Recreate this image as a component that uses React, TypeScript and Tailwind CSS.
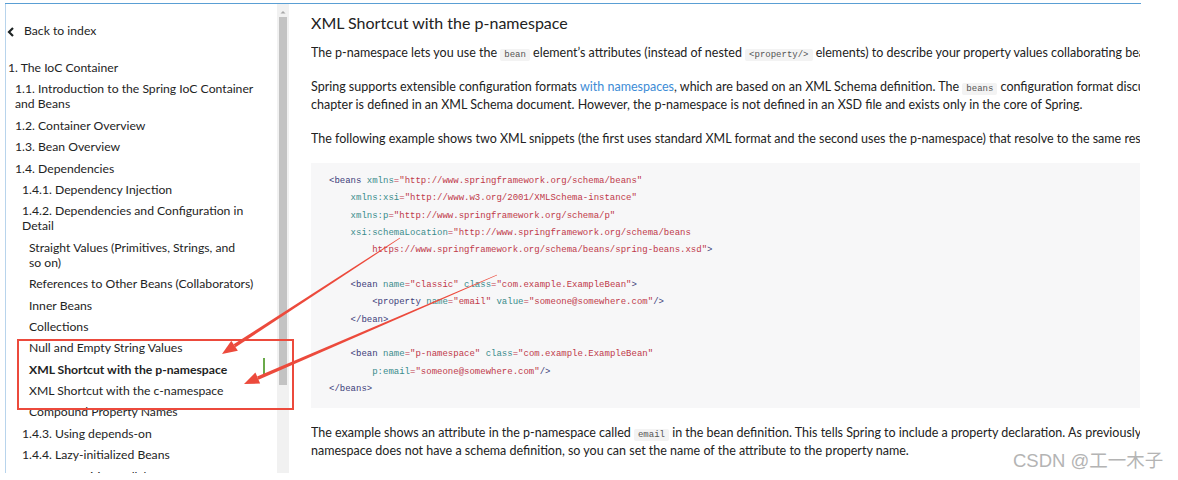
import React from "react";

type NavItem = { label: string; indent: number; bold?: boolean };

const navItems: NavItem[] = [
  { label: "1. The IoC Container", indent: 0 },
  { label: "1.1. Introduction to the Spring IoC Container and Beans", indent: 1 },
  { label: "1.2. Container Overview", indent: 1 },
  { label: "1.3. Bean Overview", indent: 1 },
  { label: "1.4. Dependencies", indent: 1 },
  { label: "1.4.1. Dependency Injection", indent: 2 },
  { label: "1.4.2. Dependencies and Configuration in Detail", indent: 2 },
  { label: "Straight Values (Primitives, Strings, and\nso on)", indent: 3 },
  { label: "References to Other Beans (Collaborators)", indent: 3 },
  { label: "Inner Beans", indent: 3 },
  { label: "Collections", indent: 3 },
  { label: "Null and Empty String Values", indent: 3 },
  { label: "XML Shortcut with the p-namespace", indent: 3, bold: true },
  { label: "XML Shortcut with the c-namespace", indent: 3 },
  { label: "Compound Property Names", indent: 3 },
  { label: "1.4.3. Using depends-on", indent: 2 },
  { label: "1.4.4. Lazy-initialized Beans", indent: 2 },
  { label: "1.4.5. Autowiring Collaborators", indent: 2 },
];

const indentClass = ["pl-[2px]", "pl-[9px]", "pl-[16px]", "pl-[23px]"];

// code tokens: [kind, text]
type Tok = [string, string];
const codeLines: Tok[][] = [
  [["tag", "<beans "], ["attr", "xmlns"], ["eq", "="], ["str", '"http://www.springframework.org/schema/beans"']],
  [["sp", "    "], ["attr", "xmlns:xsi"], ["eq", "="], ["str", '"http://www.w3.org/2001/XMLSchema-instance"']],
  [["sp", "    "], ["attr", "xmlns:p"], ["eq", "="], ["str", '"http://www.springframework.org/schema/p"']],
  [["sp", "    "], ["attr", "xsi:schemaLocation"], ["eq", "="], ["str", '"http://www.springframework.org/schema/beans']],
  [["sp", "        "], ["str", 'https://www.springframework.org/schema/beans/spring-beans.xsd"'], ["tag", ">"]],
  [],
  [["sp", "    "], ["tag", "<bean "], ["attr", "name"], ["eq", "="], ["str", '"classic"'], ["sp", " "], ["attr", "class"], ["eq", "="], ["str", '"com.example.ExampleBean"'], ["tag", ">"]],
  [["sp", "        "], ["tag", "<property "], ["attr", "name"], ["eq", "="], ["str", '"email"'], ["sp", " "], ["attr", "value"], ["eq", "="], ["str", '"someone@somewhere.com"'], ["tag", "/>"]],
  [["sp", "    "], ["tag", "</bean>"]],
  [],
  [["sp", "    "], ["tag", "<bean "], ["attr", "name"], ["eq", "="], ["str", '"p-namespace"'], ["sp", " "], ["attr", "class"], ["eq", "="], ["str", '"com.example.ExampleBean"']],
  [["sp", "        "], ["attr", "p:email"], ["eq", "="], ["str", '"someone@somewhere.com"'], ["tag", "/>"]],
  [["tag", "</beans>"]],
];

const tokColor: Record<string, string> = {
  tag: "text-[#3d3d7a]",
  attr: "text-[#3a8c8c]",
  eq: "text-[#c0394a]",
  str: "text-[#c0394a]",
  sp: "",
};

function Code({ children }: { children: React.ReactNode }) {
  return (
    <code className="bg-[#f3f3f3] rounded-[2px] px-[4px] py-[1px] text-[9px] leading-none text-[#555] font-['Liberation_Mono',monospace]">
      {children}
    </code>
  );
}

// tapered arrow polygon from (x1,y1) to tip (x2,y2)
function Arrow({ x1, y1, x2, y2, w0, w1 }: { x1: number; y1: number; x2: number; y2: number; w0: number; w1: number }) {
  const dx = x2 - x1;
  const dy = y2 - y1;
  const len = Math.sqrt(dx * dx + dy * dy);
  const ux = dx / len;
  const uy = dy / len;
  const nx = -uy;
  const ny = ux;
  const headLen = 15;
  const headW = 6;
  const bx = x2 - ux * headLen;
  const by = y2 - uy * headLen;
  const shaft = [
    [x1 + (nx * w0) / 2, y1 + (ny * w0) / 2],
    [bx + (nx * w1) / 2, by + (ny * w1) / 2],
    [bx - (nx * w1) / 2, by - (ny * w1) / 2],
    [x1 - (nx * w0) / 2, y1 - (ny * w0) / 2],
  ];
  const head = [
    [x2, y2],
    [bx + nx * headW, by + ny * headW],
    [bx - nx * headW, by - ny * headW],
  ];
  const pts = (p: number[][]) => p.map((q) => q.join(",")).join(" ");
  return (
    <g fill="#ec4a3c">
      <polygon points={pts(shaft)} />
      <polygon points={pts(head)} />
    </g>
  );
}

export default function App() {
  return (
    <div className="w-[1178px] h-[480px] bg-white relative overflow-hidden font-['Lato',sans-serif]">
      <div className="ml-[5px] mt-[3px] w-[1136px] border-t-[1.5px] border-[#5a9fd4] flex h-[470px]">
        {/* sidebar */}
        <div className="w-[272px] border-l border-[#b8d4ec] pt-[20px] text-[12.2px] text-[#1e2424] overflow-hidden">
          <div className="flex items-center h-[15px]">
            <svg width="8" height="10" viewBox="0 0 8 10" className="ml-[1px]">
              <path d="M6 1 L2 5 L6 9" stroke="#1e2424" strokeWidth="2.2" fill="none" />
            </svg>
            <span className="ml-[9px]">Back to index</span>
          </div>
          <div className="mt-[18px] flex flex-col">
            {navItems.map((item) => (
              <div
                key={item.label}
                className={`${indentClass[item.indent]} pr-[14px] leading-[15px] pt-[3px] pb-[3.4px] whitespace-pre-line ${item.bold ? "font-bold" : ""}`}
              >
                {item.label}
              </div>
            ))}
          </div>
        </div>
        {/* scrollbar */}
        <div className="w-[12px] bg-[#f1f1f1] flex flex-col items-center">
          <svg width="8" height="8" viewBox="0 0 8 8" className="mt-[4px]">
            <path d="M1.5 5.5 L4 3 L6.5 5.5 Z" fill="#a8a8a8" />
          </svg>
          <div className="mt-[1px] w-[8px] h-[368px] bg-[#c3c3c3]" />
        </div>
        {/* main content */}
        <div className="ml-[22px] w-[829px] overflow-hidden text-[12.5px] text-[#222] whitespace-nowrap">
          <h2 className="mt-[9px] text-[16px] leading-[20px] text-[#222] font-normal">
            XML Shortcut with the p-namespace
          </h2>
          <p className="mt-[11px] leading-[18px]">
            The p-namespace lets you use the <Code>bean</Code> element’s attributes (instead of nested <Code>&lt;property/&gt;</Code> elements) to describe your property values collaborating beans, or both.
          </p>
          <p className="mt-[16px] leading-[18px]">
            Spring supports extensible configuration formats <span className="text-[#3d8cd6]">with namespaces</span>, which are based on an XML Schema definition. The <Code>beans</Code> configuration format discussed in this
            <br />
            chapter is defined in an XML Schema document. However, the p-namespace is not defined in an XSD file and exists only in the core of Spring.
          </p>
          <p className="mt-[16px] leading-[18px]">
            The following example shows two XML snippets (the first uses standard XML format and the second uses the p-namespace) that resolve to the same result:
          </p>
          <pre className="mt-[15px] bg-[#f7f7f8] pt-[10px] pb-[10px] pl-[18px] text-[9px] leading-[17.35px] font-['Liberation_Mono',monospace]">
            {codeLines.map((line, i) => (
              <div key={i} className="h-[17.35px]">
                {line.map((t, j) => (
                  <span key={j} className={tokColor[t[0]]}>
                    {t[1]}
                  </span>
                ))}
              </div>
            ))}
          </pre>
          <p className="mt-[16px] leading-[18px]">
            The example shows an attribute in the p-namespace called <Code>email</Code> in the bean definition. This tells Spring to include a property declaration. As previously mentioned, the p-
            <br />
            namespace does not have a schema definition, so you can set the name of the attribute to the property name.
          </p>
        </div>
      </div>

      {/* annotations */}
      <div className="absolute left-[17px] top-[339px] w-[277px] h-[71px] border-2 border-[#ec4a3c]" />
      <div className="absolute left-[263px] top-[358px] w-[1.5px] h-[19px] bg-[#6aaa4a]" />
      <svg className="absolute left-0 top-0 pointer-events-none" width="1178" height="480">
        <Arrow x1={400} y1={238} x2={222} y2={354} w0={0.8} w1={3.5} />
        <Arrow x1={497} y1={275} x2={244} y2={384} w0={0.8} w1={3.5} />
      </svg>
      <div className="absolute left-[1013px] top-[449px] text-[18.5px] leading-[24px] text-[#b4b4b4] font-['Liberation_Sans','Noto_Sans_CJK_SC',sans-serif]">
        CSDN @工一木子
      </div>
    </div>
  );
}
